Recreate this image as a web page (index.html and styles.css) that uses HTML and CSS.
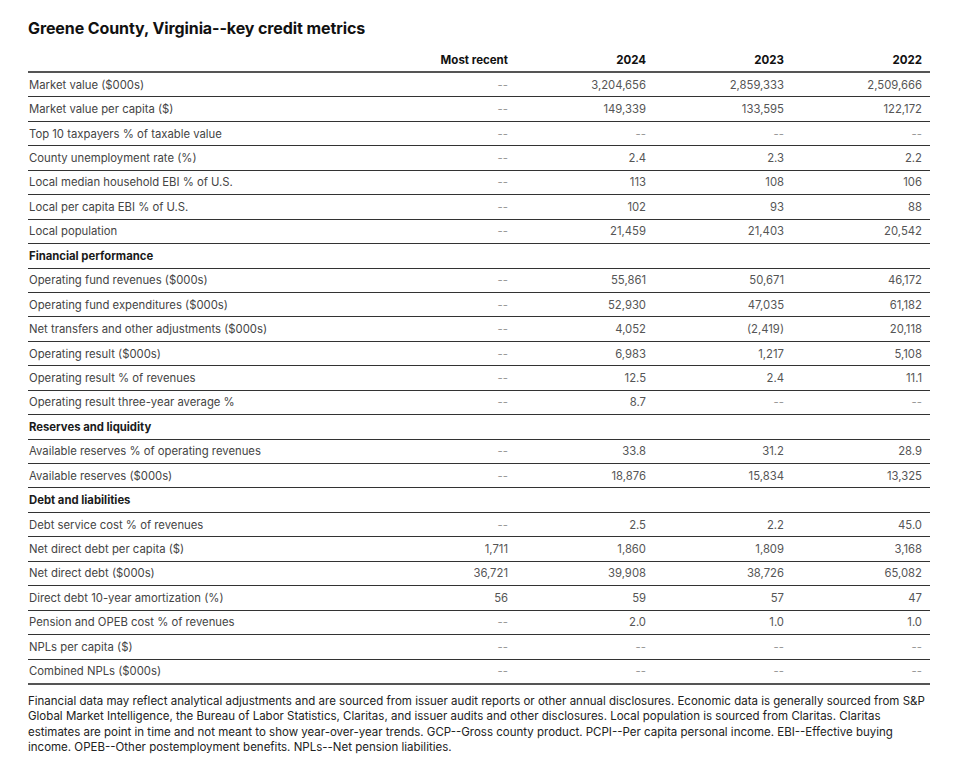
FILE: index.html
```html
<!DOCTYPE html>
<html lang="en">
<head>
<meta charset="utf-8">
<title>Greene County, Virginia--key credit metrics</title>
<link rel="stylesheet" href="styles.css">
</head>
<body>
<div class="page">
  <h1 class="title">Greene County, Virginia--key credit metrics</h1>
  <table class="metrics">
    <colgroup>
      <col class="c-label"><col class="c-num"><col class="c-num"><col class="c-num"><col class="c-num">
    </colgroup>
    <thead>
      <tr><th class="lbl"></th><th>Most recent</th><th>2024</th><th>2023</th><th>2022</th></tr>
    </thead>
    <tbody>
      <tr><td class="lbl">Market value ($000s)</td><td class="na">--</td><td>3,204,656</td><td>2,859,333</td><td>2,509,666</td></tr>
      <tr><td class="lbl">Market value per capita ($)</td><td class="na">--</td><td>149,339</td><td>133,595</td><td>122,172</td></tr>
      <tr><td class="lbl">Top 10 taxpayers % of taxable value</td><td class="na">--</td><td class="na">--</td><td class="na">--</td><td class="na">--</td></tr>
      <tr><td class="lbl">County unemployment rate (%)</td><td class="na">--</td><td>2.4</td><td>2.3</td><td>2.2</td></tr>
      <tr><td class="lbl">Local median household EBI % of U.S.</td><td class="na">--</td><td>113</td><td>108</td><td>106</td></tr>
      <tr><td class="lbl">Local per capita EBI % of U.S.</td><td class="na">--</td><td>102</td><td>93</td><td>88</td></tr>
      <tr><td class="lbl">Local population</td><td class="na">--</td><td>21,459</td><td>21,403</td><td>20,542</td></tr>
      <tr class="section"><td class="lbl">Financial performance</td><td></td><td></td><td></td><td></td></tr>
      <tr><td class="lbl">Operating fund revenues ($000s)</td><td class="na">--</td><td>55,861</td><td>50,671</td><td>46,172</td></tr>
      <tr><td class="lbl">Operating fund expenditures ($000s)</td><td class="na">--</td><td>52,930</td><td>47,035</td><td>61,182</td></tr>
      <tr><td class="lbl">Net transfers and other adjustments ($000s)</td><td class="na">--</td><td>4,052</td><td>(2,419)</td><td>20,118</td></tr>
      <tr><td class="lbl">Operating result ($000s)</td><td class="na">--</td><td>6,983</td><td>1,217</td><td>5,108</td></tr>
      <tr><td class="lbl">Operating result % of revenues</td><td class="na">--</td><td>12.5</td><td>2.4</td><td>11.1</td></tr>
      <tr><td class="lbl">Operating result three-year average %</td><td class="na">--</td><td>8.7</td><td class="na">--</td><td class="na">--</td></tr>
      <tr class="section"><td class="lbl">Reserves and liquidity</td><td></td><td></td><td></td><td></td></tr>
      <tr><td class="lbl">Available reserves % of operating revenues</td><td class="na">--</td><td>33.8</td><td>31.2</td><td>28.9</td></tr>
      <tr><td class="lbl">Available reserves ($000s)</td><td class="na">--</td><td>18,876</td><td>15,834</td><td>13,325</td></tr>
      <tr class="section"><td class="lbl">Debt and liabilities</td><td></td><td></td><td></td><td></td></tr>
      <tr><td class="lbl">Debt service cost % of revenues</td><td class="na">--</td><td>2.5</td><td>2.2</td><td>45.0</td></tr>
      <tr><td class="lbl">Net direct debt per capita ($)</td><td>1,711</td><td>1,860</td><td>1,809</td><td>3,168</td></tr>
      <tr><td class="lbl">Net direct debt ($000s)</td><td>36,721</td><td>39,908</td><td>38,726</td><td>65,082</td></tr>
      <tr><td class="lbl">Direct debt 10-year amortization (%)</td><td>56</td><td>59</td><td>57</td><td>47</td></tr>
      <tr><td class="lbl">Pension and OPEB cost % of revenues</td><td class="na">--</td><td>2.0</td><td>1.0</td><td>1.0</td></tr>
      <tr><td class="lbl">NPLs per capita ($)</td><td class="na">--</td><td class="na">--</td><td class="na">--</td><td class="na">--</td></tr>
      <tr><td class="lbl">Combined NPLs ($000s)</td><td class="na">--</td><td class="na">--</td><td class="na">--</td><td class="na">--</td></tr>
    </tbody>
  </table>
  <p class="note">Financial data may reflect analytical adjustments and are sourced from issuer audit reports or other annual disclosures. Economic data is generally sourced from S&amp;P Global Market Intelligence, the Bureau of Labor Statistics, Claritas, and issuer audits and other disclosures. Local population is sourced from Claritas. Claritas estimates are point in time and not meant to show year-over-year trends. GCP--Gross county product. PCPI--Per capita personal income. EBI--Effective buying income. OPEB--Other postemployment benefits. NPLs--Net pension liabilities.</p>
</div>
</body>
</html>
```

FILE: styles.css
```css
html, body {
  margin: 0;
  padding: 0;
  background: #ffffff;
}

.page {
  padding: 17px 0 0 28px;
  width: 902px;
  font-family: Inter, "Liberation Sans", sans-serif;
}

.title {
  margin: 0;
  font-size: 16px;
  font-weight: 700;
  line-height: 22px;
  color: #111;
  letter-spacing: -0.1px;
}

.metrics {
  margin-top: 10px;
  width: 902px;
  border-collapse: collapse;
  table-layout: fixed;
  font-size: 11.3px;
}

.c-label { width: 350px; }
.c-num { width: 138px; }

.metrics th {
  height: 22px;
  padding: 0 8px 0 0;
  text-align: right;
  font-weight: 700;
  font-size: 11.5px;
  color: #111;
  vertical-align: middle;
  border-bottom: 2px solid #555;
}

.metrics td {
  height: 23.44px;
  padding: 0 8px 0 0;
  text-align: right;
  color: #555;
  vertical-align: middle;
  border-bottom: 1px solid #333;
  white-space: nowrap;
}

.metrics .lbl {
  text-align: left;
  padding-left: 1px;
  color: #444;
}

.metrics td.na {
  color: #999;
}

.metrics tr.section td {
  font-weight: 700;
  color: #1a1a1a;
}

.metrics tbody tr:last-child td {
  border-bottom: 2px solid #555;
}

.note {
  margin: 9px 0 0 0;
  font-size: 11.5px;
  line-height: 15.4px;
  color: #222;
  width: 902px;
}
```
